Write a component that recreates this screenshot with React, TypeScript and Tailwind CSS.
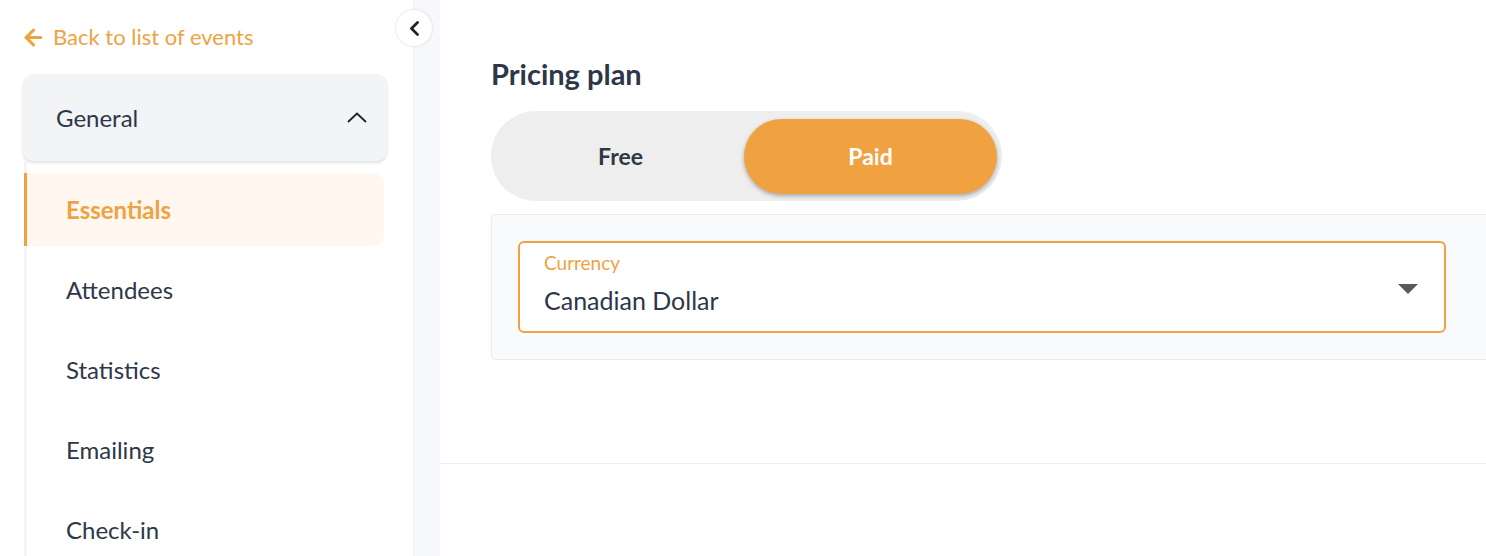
import { ArrowLeft } from 'lucide-react';

const items = ['Attendees', 'Statistics', 'Emailing', 'Check-in'];

export default function App() {
  return (
    <div
      className="flex h-[556px] w-[1486px] overflow-hidden bg-white text-[#2d3748]"
      style={{ fontFamily: 'Lato, "Noto Sans", sans-serif' }}
    >
      {/* Sidebar */}
      <aside className="relative w-[414px] shrink-0 border-r border-[#eef0f4] bg-white pl-[21px] pr-[26px]">
        <a className="mt-[23px] flex h-[28px] items-center gap-[7px] text-[22px] leading-[28px] text-[#f0a241]">
          <ArrowLeft className="h-[25px] w-[25px]" strokeWidth={3} />
          <span>Back to list of events</span>
        </a>

        <div className="ml-[2px] mt-[23px] flex h-[87px] items-center justify-between rounded-[10px] bg-[#f3f4f6] pl-[33px] pr-[20px] shadow-[0_2px_3px_rgba(0,0,0,0.12)]">
          <span className="text-[24px] text-[#2d3748]">General</span>
          <svg width="20" height="11" viewBox="0 0 20 11" fill="none" stroke="#222" strokeWidth="1.8">
            <polyline points="1,10 10,1.5 19,10" />
          </svg>
        </div>

        <div className="ml-[3px] border-l-[3px] border-[#f3f4f6] pr-[3px] pt-[12px]">
          <div className="-ml-[3px] flex h-[73px] items-center rounded-r-[10px] border-l-[3px] border-[#f0a241] bg-[#fff7f0] pl-[39px] text-[24px] font-bold text-[#f0a241]">
            Essentials
          </div>
          {items.map((item) => (
            <div key={item} className="mt-[7px] flex h-[73px] items-center pl-[39px] text-[24px] text-[#2d3748]">
              {item}
            </div>
          ))}
        </div>

        <button className="absolute right-[-19px] top-[10px] z-10 flex h-[36px] w-[36px] items-center justify-center rounded-full bg-white shadow-[0_0_3px_rgba(0,0,0,0.15)]">
          <svg width="11" height="15" viewBox="0 0 11 15" fill="none" stroke="#222" strokeWidth="2.8" strokeLinecap="round" strokeLinejoin="round">
            <polyline points="8.5,1.5 2.5,7.5 8.5,13.5" />
          </svg>
        </button>
      </aside>

      {/* Gutter */}
      <div className="w-[26px] shrink-0 bg-[#f7f8fb]" />

      {/* Main */}
      <main className="min-w-0 flex-1 overflow-hidden">
        <section className="h-[464px] border-b border-[#eceef1] pl-[51px] pt-[55px]">
          <h2 className="text-[29px] font-bold leading-[38px] text-[#2d3748]">Pricing plan</h2>

          <div className="mt-[18px] flex h-[90px] w-[511px] items-center rounded-full bg-[#eeeeee] py-[6px] pl-[6px] pr-[5px]">
            <button className="flex h-[75px] w-[247px] items-center justify-center rounded-full text-[23px] font-bold text-[#2d3748]">
              Free
            </button>
            <button className="flex h-[75px] w-[253px] items-center justify-center rounded-full bg-[#f0a241] text-[23px] font-bold text-white shadow-[0_2px_4px_rgba(0,0,0,0.3)]">
              Paid
            </button>
          </div>

          <div className="mt-[13px] w-[1020px] rounded-[4px] border border-[#e8eaee] bg-[#f9fafb] px-[26px] py-[26px]">
            <div className="flex h-[92px] w-[928px] items-start justify-between rounded-[6px] border-2 border-[#f0a241] bg-white pl-[24px] pr-[26px] pt-[8px]">
              <div className="flex flex-col">
                <span className="text-[19px] leading-[24px] text-[#f0a241]">Currency</span>
                <span className="mt-[9px] text-[25px] leading-[32px] text-[#2d3748]">Canadian Dollar</span>
              </div>
              <svg width="20" height="11" viewBox="0 0 20 11" className="mt-[33px]">
                <path d="M0 0 H20 L10 10 Z" fill="#5a5a5a" />
              </svg>
            </div>
          </div>
        </section>
      </main>
    </div>
  );
}
